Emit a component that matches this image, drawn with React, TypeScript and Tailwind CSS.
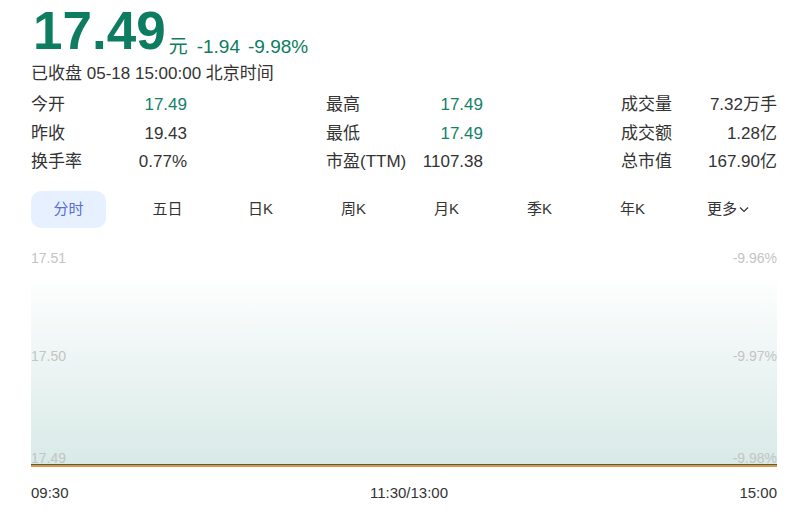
const FONT = { fontFamily: '"Liberation Sans", Arial, "Noto Sans CJK SC", sans-serif' };

const STATS = [
  [
    ["今开", "17.49", true],
    ["最高", "17.49", true],
    ["成交量", "7.32万手", false],
  ],
  [
    ["昨收", "19.43", false],
    ["最低", "17.49", true],
    ["成交额", "1.28亿", false],
  ],
  [
    ["换手率", "0.77%", false],
    ["市盈(TTM)", "1107.38", false],
    ["总市值", "167.90亿", false],
  ],
] as const;

const TABS = ["五日", "日K", "周K", "月K", "季K", "年K"];

function StatCell({ label, value, green, width }: { label: string; value: string; green: boolean; width: string }) {
  return (
    <div className={`flex items-center justify-between ${width}`}>
      <span>{label}</span>
      <span className={green ? "text-[#12826a]" : "text-[#333]"}>{value}</span>
    </div>
  );
}

export default function App() {
  return (
    <div className="w-[799px] h-[515px] overflow-hidden bg-white text-[#333]" style={FONT}>
      <div className="pl-[33px] pt-[4px] flex items-end text-[#0e7c61]">
        <span className="text-[53px] leading-[53px] font-bold">17.49</span>
        <span className="ml-[3px] text-[19px] leading-[19px] mb-[1px]">元</span>
        <span className="ml-[9px] text-[19px] leading-[19px] mb-[1px]">-1.94</span>
        <span className="ml-[8px] text-[19px] leading-[19px] mb-[1px]">-9.98%</span>
      </div>
      <div className="pl-[31px] mt-[6px] text-[17px] leading-[22px] text-[#333]">已收盘 05-18 15:00:00 北京时间</div>

      <div className="pl-[31px] pr-[22px] mt-[6px] text-[17px] leading-[22px]">
        {STATS.map((row, i) => (
          <div key={i} className="flex items-center h-[28.5px]">
            <StatCell label={row[0][0]} value={row[0][1]} green={row[0][2]} width="w-[156px]" />
            <div className="w-[139px]" />
            <StatCell label={row[1][0]} value={row[1][1]} green={row[1][2]} width="w-[157px]" />
            <div className="w-[138px]" />
            <StatCell label={row[2][0]} value={row[2][1]} green={row[2][2]} width="w-[156px]" />
          </div>
        ))}
      </div>

      <div className="pl-[31px] mt-[14px] flex items-center text-[15px] leading-[20px]">
        <div className="w-[75px] h-[37px] rounded-[10px] bg-[#e6f0ff] text-[#5b6bd8] flex items-center justify-center">分时</div>
        <div className="ml-[15px] flex">
          {TABS.map((t) => (
            <div key={t} className="w-[93px] text-center text-[#333]">{t}</div>
          ))}
          <div className="w-[93px] pl-[28px] flex items-center text-[#333]">
            更多
            <svg width="12" height="12" viewBox="0 0 12 12" className="ml-[1px]">
              <path d="M2 4.5 L6 8.5 L10 4.5" fill="none" stroke="#333" strokeWidth="1.2" />
            </svg>
          </div>
        </div>
      </div>

      <div className="ml-[31px] mr-[22px] mt-[21px] text-[14px] leading-[18px] text-[#c4c4c4]">
        <div className="flex justify-between h-[31px]">
          <span>17.51</span>
          <span>-9.96%</span>
        </div>
        <div className="relative h-[184px] bg-gradient-to-b from-[#fdfefe] to-[#d8eae7]">
          <div className="absolute inset-x-0 top-[67px] flex justify-between">
            <span>17.50</span>
            <span>-9.97%</span>
          </div>
          <div className="absolute inset-x-0 bottom-[-3px] flex justify-between">
            <span>17.49</span>
            <span>-9.98%</span>
          </div>
        </div>
        <div className="relative h-[1px] bg-[#2f6b4f]" />
        <div className="h-[2px] bg-[#f0903a]" />
        <div className="mt-[17px] flex justify-between text-[15px] leading-[18px] text-[#333]">
          <span>09:30</span>
          <span className="ml-[10px]">11:30/13:00</span>
          <span>15:00</span>
        </div>
      </div>
    </div>
  );
}
